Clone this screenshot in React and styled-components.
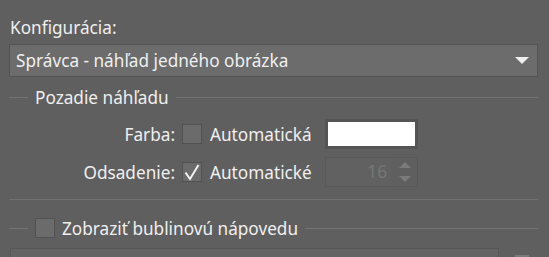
import styled, { createGlobalStyle } from 'styled-components'

const GlobalStyle = createGlobalStyle`
  html, body {
    margin: 0;
    padding: 0;
    background: #5f5f5f;
    overflow: hidden;
  }
  body {
    font-family: "Noto Sans", "Open Sans", sans-serif;
    font-size: 17.2px;
    color: #efefef;
  }
`

const Panel = styled.div`
  width: 549px;
  height: 257px;
  box-sizing: border-box;
  padding: 17px 11px 0 9px;
  overflow: hidden;
`

const Label = styled.div`
  line-height: 22px;
  padding-left: 1px;
`

const Select = styled.div`
  margin-top: 5px;
  height: 33px;
  box-sizing: border-box;
  background: #6c6c6c;
  border: 1px solid #545454;
  display: flex;
  align-items: center;
  justify-content: space-between;
  padding: 0 8px 0 6px;
`

const Arrow = styled.span`
  width: 0;
  height: 0;
  border-left: 7px solid transparent;
  border-right: 7px solid transparent;
  border-top: 7px solid #eeeeee;
`

const GroupHead = styled.div`
  display: flex;
  align-items: center;
  gap: 7px;
  height: 22px;
  margin-top: ${p => p.$top}px;

  &::before {
    content: '';
    width: 19px;
    border-top: 1px solid #737373;
  }
  &::after {
    content: '';
    flex: 1;
    border-top: 1px solid #737373;
  }
`

const Rows = styled.div`
  display: grid;
  grid-template-columns: 166px 27px 123px 93px;
  row-gap: 8px;
  grid-auto-rows: 30px;
  align-items: center;
  margin-top: 11px;
`

const RowLabel = styled.div`
  text-align: right;
`

const Box = styled.span`
  width: 20px;
  height: 20px;
  box-sizing: border-box;
  background: #6b6b6b;
  border: 1px solid #525252;
  display: inline-flex;
  align-items: center;
  justify-content: center;
  margin-left: ${p => p.$left || 0}px;
  flex-shrink: 0;
`

const BoxText = styled.span`
  padding-left: 8px;
`

const Swatch = styled.div`
  height: 30px;
  box-sizing: border-box;
  border: 3px solid #545454;
  background: #ffffff;
`

const Spin = styled.div`
  height: 30px;
  box-sizing: border-box;
  border: 1px solid #585858;
  display: flex;
  background: #5f5f5f;
`

const SpinValue = styled.div`
  flex: 1;
  background: #616161;
  color: #777777;
  text-align: right;
  padding-right: 5px;
  line-height: 28px;
`

const SpinArrows = styled.div`
  width: 25px;
  display: flex;
  flex-direction: column;
  align-items: center;
  justify-content: center;
  gap: 8px;
`

const Tri = styled.span`
  width: 0;
  height: 0;
  border-left: 6px solid transparent;
  border-right: 6px solid transparent;
  ${p => p.$up ? 'border-bottom: 6px solid #7a7a7a;' : 'border-top: 6px solid #7a7a7a;'}
`

const Separator = styled.div`
  margin-top: 12px;
  border-top: 1px solid #717171;
`

const BottomRow = styled.div`
  margin-top: 9px;
  display: flex;
  gap: 16px;
`

const Field = styled.div`
  width: 489px;
  height: 30px;
  flex-shrink: 0;
  box-sizing: border-box;
  margin-left: 1px;
  border: 1px solid #575757;
  background: #636363;
`

const SmallButton = styled.div`
  width: 14px;
  height: 30px;
  margin-top: 7px;
  background: #7a7a7a;
`

const Check = () => (
  <svg width="18" height="18" viewBox="0 0 18 18">
    <path d="M2.5 9.5 L7 16 L15.5 2" fill="none" stroke="#f2f2f2" strokeWidth="2" />
  </svg>
)

export default function App() {
  return (
    <>
      <GlobalStyle />
      <Panel>
        <Label>Konfigurácia:</Label>
        <Select>
          <span>Správca - náhľad jedného obrázka</span>
          <Arrow />
        </Select>
        <GroupHead $top={9}>Pozadie náhľadu</GroupHead>
        <Rows>
          <RowLabel>Farba:</RowLabel>
          <Box $left={7} />
          <BoxText>Automatická</BoxText>
          <Swatch />
          <RowLabel>Odsadenie:</RowLabel>
          <Box $left={7}><Check /></Box>
          <BoxText>Automatické</BoxText>
          <Spin>
            <SpinValue>16</SpinValue>
            <SpinArrows>
              <Tri $up />
              <Tri />
            </SpinArrows>
          </Spin>
        </Rows>
        <Separator />
        <GroupHead $top={17}>
          <Box />
          <span>Zobraziť bublinovú nápovedu</span>
        </GroupHead>
        <BottomRow>
          <Field />
          <SmallButton />
        </BottomRow>
      </Panel>
    </>
  )
}
